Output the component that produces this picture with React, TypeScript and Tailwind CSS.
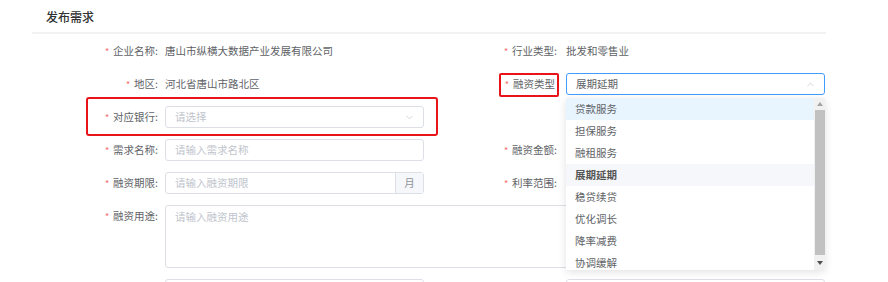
import { ChevronDown, ChevronUp } from "lucide-react";

const options = ["贷款服务", "担保服务", "融租服务", "展期延期", "稳贷续贷", "优化调长", "降率减费", "协调缓解"];

function Label({ text, colon = true, className = "" }: { text: string; colon?: boolean; className?: string }) {
  return (
    <div className={`w-[128px] shrink-0 text-right pr-[2px] leading-[22px] ${className}`}>
      <span className="text-[#f56c6c] mr-[4px] text-[9px]">*</span>
      {text}
      {colon && ":"}
    </div>
  );
}

function Input({ placeholder = "" }: { placeholder?: string }) {
  return (
    <div className="w-[259px] h-[22px] border border-[#dcdfe6] rounded-[3px] pl-[9px] flex items-center text-[#c0c4cc] bg-white">
      {placeholder}
    </div>
  );
}

export default function App() {
  return (
    <div className="w-[888px] h-[282px] overflow-hidden bg-white text-[10.5px] text-[#606266] font-['Noto_Sans_CJK_SC',sans-serif]">
      {/* header */}
      <div className="ml-[32px] w-[794px] h-[34px] border-b-2 border-[#f2f2f2] pl-[14px] pt-[1px] flex items-center text-[12px] font-medium text-[#303133]">
        发布需求
      </div>

      <div className="ml-[32px] w-[794px] pt-[6px] flex flex-col gap-[11px]">
        {/* row 1 */}
        <div className="flex h-[22px]">
          <div className="w-[399px] flex">
            <Label text="企业名称" />
            <div className="ml-[5px] leading-[22px]">唐山市纵横大数据产业发展有限公司</div>
          </div>
          <div className="flex">
            <Label text="行业类型" />
            <div className="ml-[7px] leading-[22px]">批发和零售业</div>
          </div>
        </div>

        {/* row 2 */}
        <div className="flex h-[22px]">
          <div className="w-[399px] flex">
            <Label text="地区" />
            <div className="ml-[5px] leading-[22px]">河北省唐山市路北区</div>
          </div>
          <div className="flex">
            <div className="relative">
              <Label text="融资类型" colon={false} className="pr-[4px]" />
              <div className="absolute left-[68px] top-0 w-[60px] h-[24px] border-2 border-[#e8141a] rounded-[2px] bg-transparent" />
            </div>
            <div className="ml-[7px] relative z-10">
              <div className="w-[259px] h-[22px] border border-[#409eff] rounded-[3px] pl-[9px] pr-[8px] flex items-center justify-between bg-white">
                <span>展期延期</span>
                <ChevronUp size={11} strokeWidth={1.5} className="text-[#c0c4cc]" />
              </div>
              {/* dropdown */}
              <div className="absolute left-0 top-[25px] w-[259px] h-[172px] overflow-hidden bg-white rounded-[2px] shadow-[0_2px_8px_rgba(0,0,0,0.12)] flex">
                <div className="w-[248px] flex flex-col">
                  {options.map((o, i) => (
                    <div
                      key={o}
                      className={`h-[22px] shrink-0 pl-[9px] flex items-center ${
                        i === 0 ? "bg-[#e8f4fe]" : i === 3 ? "bg-[#f5f7fa] font-bold text-[#555]" : ""
                      }`}
                    >
                      {o}
                    </div>
                  ))}
                </div>
                <div className="w-[11px] h-full bg-[#f1f1f1] flex flex-col items-center">
                  <div className="h-[12px] flex items-center justify-center">
                    <svg width="6" height="4" viewBox="0 0 6 4">
                      <path d="M0 4 L3 0 L6 4 Z" fill="#a3a3a3" />
                    </svg>
                  </div>
                  <div className="w-[10px] h-[145px] bg-[#c1c1c1]" />
                  <div className="flex-1 flex items-center justify-center">
                    <svg width="6" height="4" viewBox="0 0 6 4">
                      <path d="M0 0 L3 4 L6 0 Z" fill="#505050" />
                    </svg>
                  </div>
                </div>
              </div>
            </div>
          </div>
        </div>

        {/* row 3 */}
        <div className="flex h-[22px] relative">
          <div className="absolute left-[54px] top-[-9px] w-[352px] h-[39px] border-2 border-[#e8141a] rounded-[3px]" />
          <div className="w-[399px] flex">
            <Label text="对应银行" />
            <div className="ml-[5px] w-[259px] h-[22px] border border-[#dcdfe6] rounded-[3px] pl-[9px] pr-[8px] flex items-center justify-between text-[#c0c4cc]">
              <span>请选择</span>
              <ChevronDown size={11} strokeWidth={1.5} />
            </div>
          </div>
        </div>

        {/* row 4 */}
        <div className="flex h-[22px]">
          <div className="w-[399px] flex">
            <Label text="需求名称" />
            <div className="ml-[5px]">
              <Input placeholder="请输入需求名称" />
            </div>
          </div>
          <div className="flex">
            <Label text="融资金额" />
            <div className="ml-[7px]">
              <Input />
            </div>
          </div>
        </div>

        {/* row 5 */}
        <div className="flex h-[22px]">
          <div className="w-[399px] flex">
            <Label text="融资期限" />
            <div className="ml-[5px] w-[259px] h-[22px] border border-[#dcdfe6] rounded-[3px] flex">
              <div className="flex-1 pl-[9px] flex items-center text-[#c0c4cc]">请输入融资期限</div>
              <div className="w-[28px] bg-[#f5f7fa] border-l border-[#dcdfe6] flex items-center justify-center text-[#909399]">月</div>
            </div>
          </div>
          <div className="flex">
            <Label text="利率范围" />
            <div className="ml-[7px]">
              <Input />
            </div>
          </div>
        </div>

        {/* row 6 */}
        <div className="flex">
          <Label text="融资用途" />
          <div className="ml-[5px] w-[660px] h-[63px] border border-[#dcdfe6] rounded-[3px] pl-[9px] pt-[3px] text-[#c0c4cc]">
            请输入融资用途
          </div>
        </div>

        {/* row 7, mostly below the fold */}
        <div className="flex h-[22px]">
          <div className="w-[399px] flex">
            <div className="w-[128px] shrink-0" />
            <div className="ml-[5px]">
              <Input />
            </div>
          </div>
          <div className="flex">
            <div className="w-[128px] shrink-0" />
            <div className="ml-[7px]">
              <Input />
            </div>
          </div>
        </div>
      </div>
    </div>
  );
}
